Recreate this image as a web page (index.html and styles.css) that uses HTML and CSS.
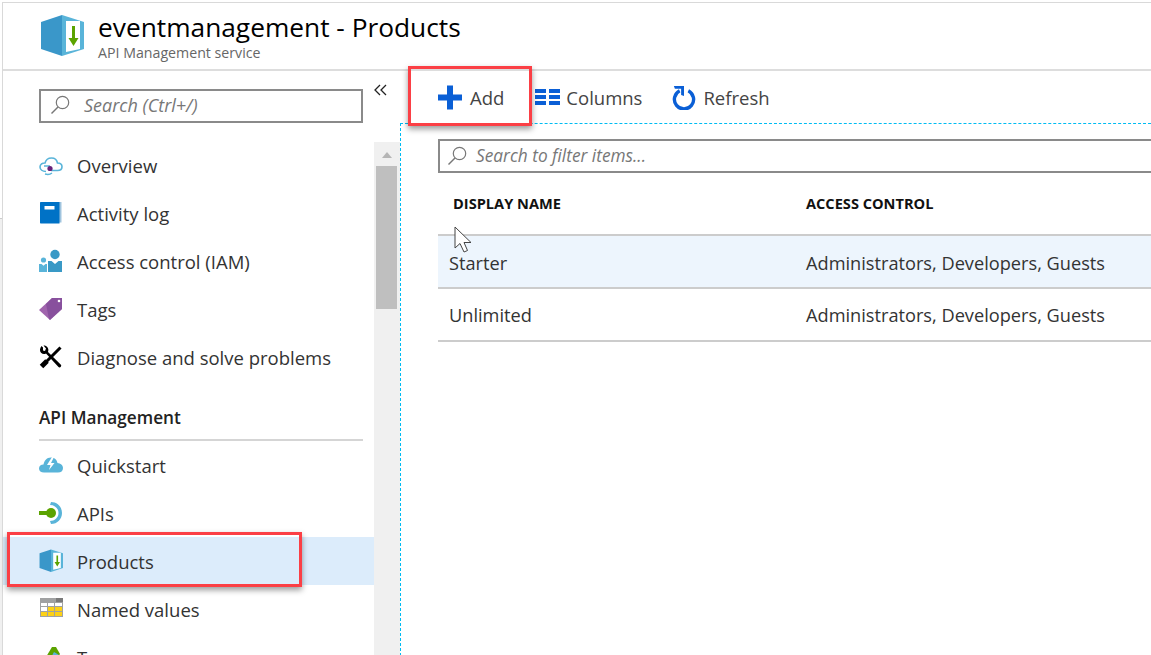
FILE: index.html
```html
<!DOCTYPE html>
<html lang="en">
<head>
  <meta charset="utf-8">
  <title>eventmanagement - Products</title>
  <link rel="stylesheet" href="styles.css">
</head>
<body>

<svg class="defs" width="0" height="0">
  <symbol id="box" viewBox="0 0 44 42">
    <path fill="#3a97c9" d="M1 7 22 0V41L1 34Z"/>
    <path fill="#59b4d9" d="M22 0 44 7V34L22 41Z"/>
    <path fill="#fff" d="M26 6H40V34L26 37Z"/>
    <path fill="#5ba300" d="M32 11H35V23H38.5L33.5 31 28.5 23H32Z"/>
  </symbol>
  <symbol id="lens" viewBox="0 0 20 20">
    <circle cx="12.5" cy="7.5" r="6.2" fill="none" stroke="#777" stroke-width="1.2"/>
    <path d="M8 12 1.5 18.5" stroke="#777" stroke-width="1.4"/>
  </symbol>
</svg>

<div class="frame">

  <!-- blade title -->
  <header class="blade-head">
    <svg class="logo"><use href="#box"/></svg>
    <div>
      <h1>eventmanagement - Products</h1>
      <p>API Management service</p>
    </div>
  </header>

  <div class="blade-body">

    <!-- left menu -->
    <aside class="side">
      <div class="side-top">
        <div class="side-search">
          <svg class="lens"><use href="#lens"/></svg>
          <span>Search (Ctrl+/)</span>
        </div>
        <svg class="collapse" viewBox="0 0 14 12"><path d="M6 1 1 6 6 11M12 1 7 6 12 11" fill="none" stroke="#222" stroke-width="1.3"/></svg>
      </div>
      <div class="side-scroll">
        <nav class="menu">
          <a class="item">
            <svg class="ico" viewBox="0 0 24 24"><path d="M7 18.500C3.500 18.500 1 16.500 1 14c0-2.500 2.500-4.200 5-4 .8-3 3-5 6.500-5 3.500 0 5.500 2.200 6 5 2.500 0 4.500 1.500 4.500 3.800 0 2.500-2 3.700-4.500 3.700H12" fill="none" stroke="#59b4d9" stroke-width="1.6"/><path d="M5 13h6M6 21c2 .6 5 .6 7-1" fill="none" stroke="#59b4d9" stroke-width="1.4"/><circle cx="11" cy="15.500" r="2.600" fill="#68217a"/></svg>
            <span>Overview</span>
          </a>
          <a class="item">
            <svg class="ico" viewBox="0 0 24 24"><path fill="#a0c4de" d="M19 1h3.500v20.500H19z"/><path fill="#0072c6" d="M1 2C1 1.300 1.300 1 2 1h18.500v21.500H2c-.7 0-1-.3-1-1z"/><path fill="#fff" d="M5.500 5h10v3.500h-10z"/></svg>
            <span>Activity log</span>
          </a>
          <a class="item">
            <svg class="ico" viewBox="0 0 24 24"><circle cx="16" cy="5.500" r="4.700" fill="#3999c6"/><path fill="#3999c6" d="M9 12h3.500l3.500 3 3.500-3H23v11H9z"/><circle cx="4.500" cy="11" r="2.600" fill="#59b4d9"/><path fill="#59b4d9" d="M0 15h2.500l2 1.800 2-1.800H8v8H0z"/></svg>
            <span>Access control (IAM)</span>
          </a>
          <a class="item">
            <svg class="ico" viewBox="0 0 24 24"><path fill="#a064ad" d="M0 13 13 1h10v11L11 23Z"/><path fill="#804998" d="M7 7 13 1h10v11L11 23l-1-.9Z" opacity=".75"/><circle cx="20" cy="4" r="1.300" fill="#fff"/></svg>
            <span>Tags</span>
          </a>
          <a class="item">
            <svg class="ico" viewBox="0 0 24 24"><path d="M21.500 2.500 6 18" stroke="#000" stroke-width="3"/><path d="M8 16 2.500 21.500" stroke="#000" stroke-width="5"/><path d="M4 2.500 2.500 1C.8 3 .4 6 2 7.800c1.600 1.500 3.500 1.500 5 .7L19.500 22c1.300 1.300 3.700-1 2.400-2.300L9 7c.7-1.800.5-3.800-1-5.200C7 .8 5.500.5 4.500.6L7 3.500 6 6 4 5.500z" fill="#000"/></svg>
            <span>Diagnose and solve problems</span>
          </a>

          <div class="menu-group">API Management</div>

          <a class="item">
            <svg class="ico" viewBox="0 0 24 24"><path fill="#59b4d9" d="M5 19.500C2 19.500 0 18 0 15.500s2-4 4.500-4C5 8 7.500 4.500 12 4.500c4 0 6 2.500 6.500 5.500 3 .2 5.500 2 5.500 5s-2 4.500-5 4.500Z"/><path fill="#fff" d="M13 4 8 12h3.500L10 17l5.500-7H12l3-6z"/></svg>
            <span>Quickstart</span>
          </a>
          <a class="item">
            <svg class="ico" viewBox="0 0 24 24"><path fill="#59b4d9" d="M12 1c6.500 0 11 5 11 11s-4.500 11-11 11l-1-3c4.500 0 8.500-3.500 8.500-8S16 4 11 4Z"/><circle cx="12" cy="12" r="5" fill="#5ba300"/><path fill="#5ba300" d="M0 10h9v4H0z"/></svg>
            <span>APIs</span>
          </a>
          <a class="item active">
            <svg class="ico"><use href="#box"/></svg>
            <span>Products</span>
          </a>
          <a class="item">
            <svg class="ico" viewBox="0 0 24 24"><path fill="#a0a1a2" d="M1 1h23v19H1z"/><path fill="#7a7a7a" d="M17 1h7v4h-7z"/><path fill="#fff" d="M2 6h6v3H2zM9 6h6v3H9zM16 6h7v3h-7zM2 10h6v4H2z"/><path fill="#fcd116" d="M9 10h6v4H9zM16 10h7v4h-7zM2 15h6v4H2zM9 15h6v4H9zM16 15h7v4h-7z"/></svg>
            <span>Named values</span>
          </a>
          <a class="item">
            <svg class="ico" viewBox="0 0 24 24"><path fill="#5ba300" d="M1 22 13 2h4l4 7-9 13Z"/><path fill="#59b4d9" d="M8 20 15 7l5 3-5 10Z"/><path fill="#804998" d="M12 22l5-8 5 3-2 5Z"/></svg>
            <span>Tags</span>
          </a>
        </nav>
        <div class="scrollbar">
          <div class="scroll-up"></div>
          <div class="scroll-thumb"></div>
        </div>
      </div>
    </aside>

    <!-- products list -->
    <main class="content">
      <div class="toolbar">
        <a class="tool">
          <svg class="tool-ico" viewBox="0 0 24 24"><path fill="#0a5fd6" d="M9 0h6v9h9v6h-9v9H9v-9H0V9h9z"/></svg>
          Add
        </a>
        <a class="tool">
          <svg class="tool-ico cols" viewBox="0 0 25 16"><path fill="#0a5fd6" d="M0 0h11v4H0zM14 0h11v4H14zM0 6h11v4H0zM14 6h11v4H14zM0 12h11v4H0zM14 12h11v4H14z"/></svg>
          Columns
        </a>
        <a class="tool">
          <svg class="tool-ico refresh" viewBox="0 0 24 26"><path d="M7.500 6a10 10 0 1 0 9 0" fill="none" stroke="#0a5fd6" stroke-width="3.500"/><path fill="#0a5fd6" d="M1.500 1h10.500v10.500L9 10.500V4H2.500z"/></svg>
          Refresh
        </a>
      </div>

      <div class="list-area">
        <div class="filter">
          <svg class="lens"><use href="#lens"/></svg>
          <span>Search to filter items...</span>
        </div>
        <div class="row head">
          <div class="cell-name">DISPLAY NAME</div>
          <div>ACCESS CONTROL</div>
        </div>
        <div class="row hovered">
          <div class="cell-name">Starter</div>
          <div>Administrators, Developers, Guests</div>
        </div>
        <div class="row">
          <div class="cell-name">Unlimited</div>
          <div>Administrators, Developers, Guests</div>
        </div>
      </div>
    </main>
  </div>
</div>

<!-- screenshot annotations -->
<div class="mark mark-add"></div>
<div class="mark mark-products"></div>
<svg class="cursor" viewBox="0 0 19 27"><path d="M1 1V22L6 17.500 10 26 13.500 24.500 10 16.500H17Z" fill="#fff" stroke="#444" stroke-width="1"/></svg>

</body>
</html>
```

FILE: styles.css
```css
html, body {
  margin: 0;
  height: 655px;
  overflow: hidden;
}

body {
  position: relative;
  padding-top: 2px;
  box-sizing: border-box;
  font-family: "Open Sans", "Noto Sans", sans-serif;
  color: #333;
  background: linear-gradient(#fff 218px, #ccc 218px, #ccc 219px, #f0f0f0 219px);
}

.defs {
  position: absolute;
}

.frame {
  margin-left: 3px;
  height: 653px;
  background-color: #fff;
  border-top: 1px solid #d9d9d9;
  box-shadow: -1px 0 0 #d9d9d9;
  overflow: hidden;
}

/* title */
.blade-head {
  height: 66px;
  display: flex;
  align-items: flex-start;
  padding-left: 37px;
  border-bottom: 2px solid #ddd;
  box-sizing: content-box;
}

.logo {
  width: 44px;
  height: 42px;
  margin-top: 12px;
  margin-right: 14px;
}

.blade-head h1 {
  margin: 7px 0 0;
  font-size: 26.3px;
  line-height: 34px;
  font-weight: 400;
  color: #000;
}

.blade-head p {
  margin: 0;
  font-size: 14.2px;
  line-height: 17px;
  color: #666;
}

.blade-body {
  display: flex;
  height: 585px;
}

/* left menu */
.side {
  width: 397px;
  flex: none;
}

.side-top {
  height: 71px;
  display: flex;
  align-items: flex-start;
  padding-left: 36px;
  box-sizing: border-box;
}

.side-search {
  width: 324px;
  height: 34px;
  margin-top: 18px;
  display: flex;
  align-items: center;
  box-sizing: border-box;
  border: 2px solid #8a8a8a;
  padding-left: 9px;
  padding-bottom: 2px;
  font-size: 18px;
  font-style: italic;
  color: #777;
}

.side-search .lens {
  margin-right: 14px;
}

.lens {
  width: 20px;
  height: 20px;
  flex: none;
}

.collapse {
  width: 14px;
  height: 12px;
  margin: 13px 0 0 11px;
}

.side-scroll {
  display: flex;
  height: 514px;
}

.menu {
  width: 371px;
  flex: none;
  margin-top: -1px;
}

.item {
  height: 48px;
  display: flex;
  align-items: center;
  padding-left: 36px;
  font-size: 18.5px;
  color: #333;
}

.item.active {
  background-color: #dcecfb;
}

.ico {
  width: 24px;
  height: 24px;
  flex: none;
  margin-right: 14px;
}

.menu-group {
  height: 60px;
  margin: 0 11px 0 36px;
  box-sizing: border-box;
  padding-top: 26px;
  border-bottom: 2px solid #d5d5d5;
  font-size: 17.2px;
  line-height: 22px;
  font-weight: 600;
  color: #222;
}

.scrollbar {
  width: 26px;
  background-color: #f0f0f0;
  padding-left: 2px;
  box-sizing: border-box;
}

.scroll-up {
  width: 0;
  margin: 10px 0 0 6px;
  border-left: 5px solid transparent;
  border-right: 5px solid transparent;
  border-bottom: 6px solid #b5b5b5;
}

.scroll-thumb {
  width: 21px;
  height: 143px;
  margin-top: 8px;
  background-color: #bfbfbf;
}

/* products list */
.content {
  flex: 1;
  min-width: 0;
  overflow: hidden;
}

.toolbar {
  height: 52px;
  display: flex;
  align-items: center;
  gap: 30px;
  padding-left: 38px;
  font-size: 18.5px;
  color: #444;
}

.tool {
  display: flex;
  align-items: center;
}

.tool-ico {
  width: 24px;
  height: 25px;
  margin-right: 8px;
}

.tool-ico.cols {
  width: 25px;
  height: 16px;
  margin-right: 6px;
  margin-left: 1px;
}

.tool-ico.refresh {
  margin-right: 7px;
}

.list-area {
  height: 533px;
  padding: 15px 0 0 37px;
  box-sizing: border-box;
  border-top: 1px dashed #00bcf2;
  border-left: 1px dashed #00bcf2;
}

.filter {
  width: 740px;
  height: 34px;
  display: flex;
  align-items: center;
  gap: 7px;
  padding-left: 7px;
  padding-bottom: 1px;
  box-sizing: border-box;
  border: 2px solid #8a8a8a;
  font-size: 17.3px;
  font-style: italic;
  color: #777;
}

.filter .lens {
  margin-right: 2px;
}

.row {
  height: 53px;
  display: flex;
  align-items: center;
  padding-left: 11px;
  box-sizing: border-box;
  border-bottom: 2px solid #ccc;
  font-size: 18.2px;
  color: #333;
  white-space: nowrap;
}

.row.head {
  height: 63px;
  padding-left: 15px;
  padding-bottom: 2px;
  font-size: 14.6px;
  font-weight: 700;
  color: #111;
}

.cell-name {
  width: 357px;
  flex: none;
}

.row.head .cell-name {
  width: 353px;
}

.row.hovered {
  padding-top: 2px;
  background-color: #edf5fd;
}

/* annotations */
.mark {
  position: absolute;
  box-sizing: border-box;
  border: 3px solid #fb3f45;
  box-shadow: 0 3px 6px rgba(0, 0, 0, 0.4);
}

.mark-add {
  left: 408px;
  top: 66px;
  width: 124px;
  height: 60px;
}

.mark-products {
  left: 7px;
  top: 532px;
  width: 295px;
  height: 55px;
}

.cursor {
  position: absolute;
  left: 454px;
  top: 226px;
  width: 19px;
  height: 27px;
}
```
